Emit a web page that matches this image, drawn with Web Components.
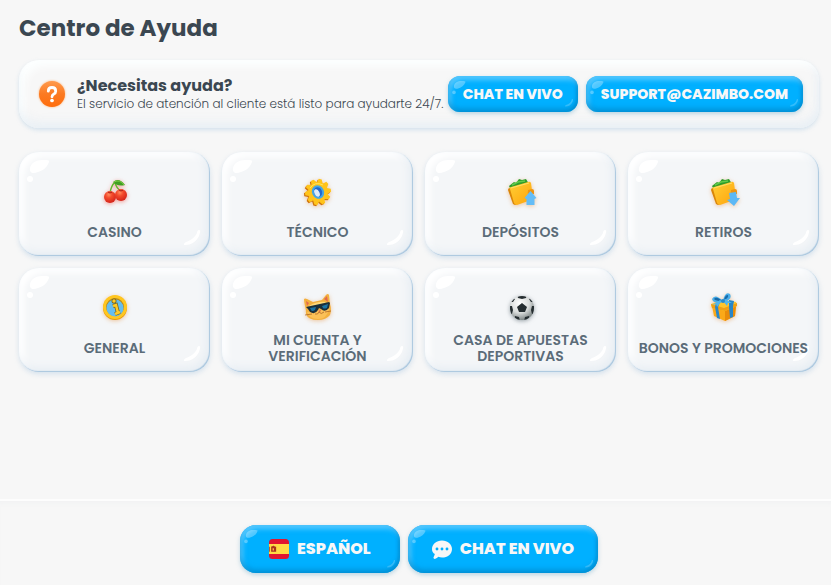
<!DOCTYPE html>
<html lang="es">
<head>
<meta charset="utf-8">
<meta name="viewport" content="width=device-width, initial-scale=1">
<title>Centro de Ayuda</title>
<style>
  body {
    margin: 0;
    background: #f7f7f7;
    color: #3b4751;
    font-family: Poppins, Inter, "Open Sans", sans-serif;
  }
</style>
</head>
<body>
<help-center>
  <help-banner slot="banner">
    <span slot="title">¿Necesitas ayuda?</span>
    <span slot="text">El servicio de atención al cliente está listo para ayudarte 24/7.</span>
    <glossy-button slot="actions">CHAT EN VIVO</glossy-button>
    <glossy-button slot="actions" href="mailto:support@cazimbo.com">SUPPORT@CAZIMBO.COM</glossy-button>
  </help-banner>
  <topic-card icon="cherry" href="#casino">CASINO</topic-card>
  <topic-card icon="gear" href="#tecnico">TÉCNICO</topic-card>
  <topic-card icon="deposit" href="#depositos">DEPÓSITOS</topic-card>
  <topic-card icon="withdraw" href="#retiros">RETIROS</topic-card>
  <topic-card icon="info" href="#general">GENERAL</topic-card>
  <topic-card icon="cat" href="#cuenta">MI CUENTA Y VERIFICACIÓN</topic-card>
  <topic-card icon="ball" href="#apuestas">CASA DE APUESTAS DEPORTIVAS</topic-card>
  <topic-card icon="gift" href="#bonos">BONOS Y PROMOCIONES</topic-card>
  <glossy-button slot="footer" size="large" icon="flag">ESPAÑOL</glossy-button>
  <glossy-button slot="footer" size="large" icon="chat">CHAT EN VIVO</glossy-button>
</help-center>

<script>
const wallet = `
  <defs><linearGradient id="w" x1="0" y1="0" x2="1" y2="1"><stop stop-color="#ffcf36"/><stop offset="1" stop-color="#ffa30a"/></linearGradient></defs>
  <path d="m2 8 5-4 2 1 3-4 3 1 4-1 3 5-18 6z" fill="#2f9d2c"/>
  <path d="m5 7 6-3 7-1" stroke="#63c94a" stroke-width="1.500" fill="none"/>
  <path d="M1 12q0-2 2-2l3 1 4 14q0 2-2 2l-2-1z" fill="#d98508"/>
  <path d="M3 11q-1-2 1-2l17-5q2-1 3 1l2 15q0 2-2 2L10 27q-2 0-3-2z" fill="url(#w)"/>
  <path d="m4 10 18-5" stroke="#ffe069" fill="none"/>
  <path d="m21 12 4-1q2 0 2 2v3l-5 1q-2-2-1-5z" fill="#ef9510"/>`;

const tooth = [0, 36, 72, 108, 144, 180, 216, 252, 288, 324]
  .map((a) => `<path d="M11 5 12 1h3l2 4z" transform="rotate(${a + 12} 14 14)"/>`)
  .join('');

const ICONS = {
  question: `
    <defs><linearGradient id="q" x1="0" y1="0" x2="0" y2="1"><stop stop-color="#ff9a4c"/><stop offset=".5" stop-color="#fb7a22"/><stop offset="1" stop-color="#ff6d0c"/></linearGradient></defs>
    <circle cx="14" cy="14" r="14" fill="url(#q)"/>
    <path d="M10 11q0-4 4-4t4 4q0 2-2 3t-2 3" fill="none" stroke="#fff" stroke-width="3" stroke-linecap="round" stroke-linejoin="round"/>
    <circle cx="14" cy="21" r="2" fill="#fff"/>`,
  cherry: `
    <defs><radialGradient id="c" cx=".4" cy=".3" r=".7"><stop stop-color="#ff8a5c"/><stop offset=".4" stop-color="#f34a2c"/><stop offset="1" stop-color="#d4241a"/></radialGradient></defs>
    <path d="M9 15q1-7 5-11 1 6 6 9" fill="none" stroke="#62b62c" stroke-width="1.500"/>
    <path d="M12 4q6-5 12 3-7 2-12-3z" fill="#3f9f22"/>
    <path d="M13 4q6-3 10 3" stroke="#7ccc45" fill="none"/>
    <circle cx="9" cy="19" r="6" fill="url(#c)"/><circle cx="20" cy="17" r="6" fill="url(#c)"/>
    <path d="m7 14 2 1 2-1m7-2 2 1 2-1" stroke="#a81d15" fill="none"/>`,
  gear: `
    <g transform="translate(-1 1)" fill="#cf720a">${tooth}<circle cx="14" cy="14" r="10"/></g>
    <g fill="#ffc41a">${tooth}<circle cx="14" cy="14" r="10"/></g>
    <path d="M6 10q5-7 13-3" fill="none" stroke="#ffe45c"/>
    <ellipse cx="14" cy="14" rx="6" ry="7" fill="#45a6e4" transform="rotate(-25 14 14)"/>
    <ellipse cx="14" cy="14" rx="4" ry="5" fill="#2167ce" transform="rotate(-25 14 14)"/>
    <ellipse cx="13" cy="15" rx="2.500" ry="4" fill="#dcebfb" transform="rotate(-25 13 15)"/>`,
  deposit: `${wallet}<path d="m23.500 13 6 7-2 1v6h-8v-6l-2-1z" fill="#64bdf7"/>`,
  withdraw: `${wallet}<path d="m19 15 7-1 1 6 3 0-6 8-7-6 3-1z" fill="#5cb8f5"/>`,
  info: `
    <circle cx="14" cy="14" r="12" fill="#e99a08"/>
    <circle cx="14" cy="13" r="12" fill="#ffc61f"/>
    <circle cx="14" cy="13" r="9" fill="#b98a1c"/>
    <circle cx="14" cy="14" r="8.500" fill="#66bdee"/>
    <g fill="none" stroke="#77651f" stroke-width="4"><path d="m12 12 3-1 2 8"/><path d="m14 20 5-2"/></g>
    <circle cx="13" cy="7" r="2.500" fill="#77651f"/>
    <g fill="none" stroke="#ffca25" stroke-width="2.500"><path d="m12 12 3-1 2 8"/><path d="m14 20 5-2"/></g>
    <circle cx="13" cy="7" r="1.700" fill="#ffca25"/>`,
  cat: `
    <path d="M0 5q1-1 3 0l6 3 9-2 4-5q2-2 3 0l1 9q2 6 0 11-4 5-12 5-10 0-12-6 0-5-1-8Q0 8 0 5z" fill="#f3b03e"/>
    <path d="m2 7 3 2-2 3zm18-2 3-3 1 6z" fill="#e3694d"/>
    <path d="M5 12q8-5 17-4l-4 5-12 2z" fill="#ffd978"/>
    <path d="M3 18q9-2 11-2 6 0 11-1-2 10-11 10-9 0-11-7z" fill="#fbc057"/>
    <path d="m2 13 23-5 1 1-1 5q-4 5-8 1l-2-1-1 2q-3 5-8 2l-2-3z" fill="#1a2f3a"/>
    <path d="m6 14 6-1-1 3q-3 2-4 0zm12-2 6-2-1 4q-3 1-4 0z" fill="#1b74a3"/>
    <path d="m14 17 3-1-1 2z" fill="#d85745"/>
    <path d="M11 20q3 1 4-2 2 3 5 0M1 21l7-1m13-2 6-1" stroke="#a45a20" stroke-width=".7" fill="none"/>`,
  ball: `
    <defs><radialGradient id="b" cx=".4" cy=".3" r=".8"><stop stop-color="#fff"/><stop offset=".5" stop-color="#d9dcdb"/><stop offset="1" stop-color="#626b6b"/></radialGradient><clipPath id="r"><circle cx="15" cy="14" r="12"/></clipPath></defs>
    <circle cx="15" cy="14" r="12" fill="url(#b)"/>
    <g clip-path="url(#r)"><path d="m15 9 5 4-2 5h-6l-2-5zM10 1h10l-1 3-4 1-4-1zM1 12l4 0 1 4-1 4-4 1zM29 12l-4 0-1 4 1 4 4 1zM8 22l4 1 1 4H7zM22 22l-4 1-1 4h6zM4 8l2-4 2 1-2 3zM26 8l-2-4-2 1 2 3z" fill="#252d30"/></g>`,
  gift: `
    <path d="m2 12 12 4 12-5-1 11-10 5-11-5z" fill="#fba918"/>
    <path d="m15 15 11-4-1 11-10 5z" fill="#e98c0a"/>
    <path d="m1 10 11-4 14 2 1 4-12 5-13-3z" fill="#ffc52d"/>
    <path d="m1 10 13 4 13-5v3l-12 5-13-3z" fill="#f0a016"/>
    <path d="m6 9 4-1-2 5 2 12-3-1-2-11zm13-3 5 1-1 5v11l-3 1-1-11z" fill="#2986c8"/>
    <path d="M13 7Q5-1 2 5q1 5 11 3zm0 0Q15-3 20 0q3 6-7 8z" fill="#49aeea"/>
    <path d="M11 6Q6 2 4 5q2 2 7 2zm3 0q1-5 4-5 1 3-4 5z" fill="#176aa8"/>
    <path d="m12 7-5 6-1-3-4 1 8-5zm1 0 4 5 1-3 4 0-7-4z" fill="#50b6ee"/>
    <circle cx="13" cy="7" r="2" fill="#2a8bcd"/>`,
  flag: `
    <defs><clipPath id="f"><rect width="28" height="28" rx="5"/></clipPath></defs>
    <g clip-path="url(#f)"><path d="M0 0h28v28H0z" fill="#e01631"/><path d="M0 7h28v14H0z" fill="#ffda44"/>
    <path d="M0 11h1v7H0zm3 0 1-1h1l1-1 1 1h1l1 1v7H3zm6 0h1v7H9z" fill="#a8331c"/><path d="M5 13h2v3H5z" fill="#ffb544"/></g>`,
  chat: `
    <path fill="#f7f7f7" fill-rule="evenodd" d="M14 2C6 2 0 7 0 14q0 5 4 7-1 3-2 5 0 2 2 2 3-1 5-3 2 1 5 1c8 0 14-5 14-12S22 2 14 2zM7 12a2 2 0 1 1 0 4 2 2 0 0 1 0-4zm7 0a2 2 0 1 1 0 4 2 2 0 0 1 0-4zm7 0a2 2 0 1 1 0 4 2 2 0 0 1 0-4z"/>`,
};

class HelpIcon extends HTMLElement {
  constructor() {
    super();
    this.attachShadow({ mode: 'open' });
  }
  static get observedAttributes() {
    return ['name'];
  }
  attributeChangedCallback() {
    this.shadowRoot.innerHTML = `
      <style>
        :host { display: block; flex: none; width: 28px; height: 28px; }
        svg { display: block; width: 100%; height: 100%; overflow: visible; }
      </style>
      <svg viewBox="0 0 28 28" aria-hidden="true">${ICONS[this.getAttribute('name')] || ''}</svg>`;
  }
}
customElements.define('help-icon', HelpIcon);

// The light spots on every card and button
const shine = `
  <svg class="shine shine--top" viewBox="0 0 20 20" aria-hidden="true">
    <path d="M0 8C1 3 6 0 12 0c5 0 8 0 7 2-2 6-7 9-11 10-5 2-9 1-8-4z"/>
    <circle cx="0" cy="19" r="3"/>
  </svg>
  <svg class="shine shine--bottom" viewBox="0 0 16 16" aria-hidden="true">
    <path d="M15 0c2 0 1 3 0 6-3 6-8 9-14 9-2 0-1-2 1-3 6-2 9-5 11-9 0-2 1-3 2-3z"/>
  </svg>`;

class GlossyButton extends HTMLElement {
  constructor() {
    super();
    this.attachShadow({ mode: 'open' });
  }
  connectedCallback() {
    const href = this.getAttribute('href');
    const icon = this.getAttribute('icon');
    const tag = href ? 'a' : 'button';
    this.shadowRoot.innerHTML = `
      <style>
        :host { display: block; flex: none; }
        .button {
          position: relative;
          display: flex;
          align-items: center;
          justify-content: center;
          gap: 8px;
          box-sizing: border-box;
          width: 100%;
          height: 36px;
          padding: 0 15px;
          border: 0;
          border-radius: 12px;
          background: #00b0ff;
          box-shadow: 0 2px 4px #7fb5d080, inset 0 -4px 5px #0088cc99,
            inset 3px 4px 5px #7bd4ffb0, inset -2px -1px 3px #0083c480;
          color: #f7f7f7;
          font: 800 14px/20px Poppins, Inter, "Open Sans", sans-serif;
          text-decoration: none;
          white-space: nowrap;
          cursor: pointer;
        }
        .shine { position: absolute; fill: #fff; overflow: visible; pointer-events: none; }
        .shine--top { top: 5px; left: 6px; width: 12px; height: 12px; opacity: .3; }
        .shine--bottom { right: 5px; bottom: 5px; width: 8px; height: 8px; opacity: .2; }
        help-icon { width: 20px; height: 20px; }
        :host([size="large"]) { min-width: 160px; }
        :host([size="large"]) .button {
          height: 48px;
          padding: 0 24px;
          border-radius: 16px;
          font-size: 16px;
          line-height: 24px;
        }
      </style>
      <${tag} class="button" ${href ? `href="${href}"` : 'type="button"'}>
        ${icon ? `<help-icon name="${icon}"></help-icon>` : ''}
        <span><slot></slot></span>
        ${shine}
      </${tag}>`;
  }
}
customElements.define('glossy-button', GlossyButton);

class HelpBanner extends HTMLElement {
  constructor() {
    super();
    this.attachShadow({ mode: 'open' }).innerHTML = `
      <style>
        :host {
          display: flex;
          align-items: center;
          gap: 12px;
          padding: 16px 16px 16px 20px;
          border-radius: 20px;
          box-shadow: 0 2px 4px #c4d8e8b0, inset 0 -8px 10px -2px #e6eef4c0,
            inset 6px 6px 8px #fdffff, inset -4px 0 6px #f0f4f7;
        }
        help-icon { width: 26px; height: 26px; filter: drop-shadow(0 0 1px #ffb070); }
        .text { flex: 1; min-width: 0; }
        h2 { margin: 0; font-size: 16px; line-height: 20px; font-weight: 700; }
        p { margin: 0; font-size: 12px; line-height: 16px; font-weight: 300; white-space: nowrap; }
        .actions { display: flex; gap: 8px; }
      </style>
      <help-icon name="question"></help-icon>
      <div class="text">
        <h2><slot name="title"></slot></h2>
        <p><slot name="text"></slot></p>
      </div>
      <div class="actions"><slot name="actions"></slot></div>`;
  }
}
customElements.define('help-banner', HelpBanner);

class TopicCard extends HTMLElement {
  constructor() {
    super();
    this.attachShadow({ mode: 'open' });
  }
  connectedCallback() {
    this.shadowRoot.innerHTML = `
      <style>
        :host { display: block; }
        a {
          position: relative;
          display: flex;
          flex-direction: column;
          align-items: center;
          gap: 10px;
          box-sizing: border-box;
          height: 100%;
          padding: 26px 8px 8px;
          border-radius: 20px;
          background: #f4f6f8;
          box-shadow: 0 2px 5px #bfd4e6a0, inset -1px -1px 1px #a9c6de,
            inset -4px -4px 8px #e6edf3, inset 5px 5px 7px #fff;
          color: #5b6c79;
          text-decoration: none;
        }
        help-icon { filter: drop-shadow(0 1px 2px var(--glow, #e8a05a90)); }
        :host([icon="cherry"]) { --glow: #f0504090; }
        :host([icon="ball"]) { --glow: #50606890; }
        .label {
          position: relative;
          display: flex;
          align-items: center;
          min-height: 32px;
          font-size: 14px;
          line-height: 16px;
          font-weight: 600;
          text-align: center;
        }
        .shine { position: absolute; fill: #fff; overflow: visible; pointer-events: none; }
        .shine--top { top: 8px; left: 11px; width: 20px; height: 20px; }
        .shine--bottom { right: 10px; bottom: 10px; width: 16px; height: 16px; }
      </style>
      <a href="${this.getAttribute('href')}">
        ${shine}
        <help-icon name="${this.getAttribute('icon')}"></help-icon>
        <span class="label"><span><slot></slot></span></span>
      </a>`;
  }
}
customElements.define('topic-card', TopicCard);

class HelpCenter extends HTMLElement {
  constructor() {
    super();
    this.attachShadow({ mode: 'open' }).innerHTML = `
      <style>
        :host { display: flex; flex-direction: column; min-height: 100vh; }
        main { flex: 1; padding: 12px 12px 24px 19px; }
        h1 { margin: 0 0 16px; font-size: 23px; line-height: 32px; font-weight: 700; }
        .topics {
          display: grid;
          grid-template-columns: repeat(4, minmax(0, 1fr));
          gap: 12px;
          margin-top: 24px;
        }
        footer {
          display: flex;
          justify-content: center;
          gap: 8px;
          padding: 24px 12px 12px 19px;
          border-top: 2px solid #fdfdfd;
          box-shadow: inset 0 5px 5px -3px #f1f2f3;
        }
      </style>
      <main>
        <h1>Centro de Ayuda</h1>
        <slot name="banner"></slot>
        <div class="topics"><slot></slot></div>
      </main>
      <footer><slot name="footer"></slot></footer>`;
  }
}
customElements.define('help-center', HelpCenter);
</script>
</body>
</html>
